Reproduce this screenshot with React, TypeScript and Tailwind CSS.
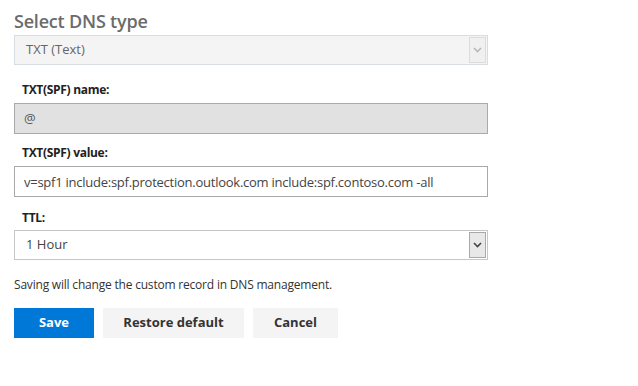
import React, { useState } from 'react';

const font = { fontFamily: '"Open Sans", "Noto Sans", Arial, sans-serif' };

function Chevron({ className }: { className?: string }) {
    return (
        <svg width="9" height="6" viewBox="0 0 9 6" className={className}>
            <path d="M1 1 L4.5 4.5 L8 1" fill="none" stroke="currentColor" strokeWidth="1.6" />
        </svg>
    );
}

export default function App() {
    const [value, setValue] = useState('v=spf1 include:spf.protection.outlook.com include:spf.contoso.com -all');

    return (
        <div className="w-[638px] h-[386px] bg-white px-[14px] pt-[9px] text-[#333]" style={font}>
            <h2 className="text-[18px] leading-[24px] text-[#6b6b6b] font-semibold tracking-[-0.2px]">Select DNS type</h2>

            <div className="mt-[2px] w-[474px] h-[30px] flex items-stretch bg-[#f4f4f4] border border-[#d8dde1]">
                <div className="flex-1 flex items-center pl-[11px] text-[13px] text-[#666]">TXT (Text)</div>
                <div className="w-[17px] my-[1px] mr-[1px] border border-[#dcdcdc] bg-[#f0f0f0] flex items-center justify-center text-[#b8b8b8]">
                    <Chevron />
                </div>
            </div>

            <label className="block mt-[17px] ml-[8px] text-[12px] leading-[16px] font-bold text-[#222] tracking-[-0.3px]">TXT(SPF) name:</label>
            <div className="mt-[5px] w-[474px] h-[31px] flex items-center bg-[#e1e1e1] border border-[#a6aaa9] pl-[9px] text-[13px] text-[#555]">@</div>

            <label className="block mt-[11px] ml-[8px] text-[12px] leading-[16px] font-bold text-[#222] tracking-[-0.3px]">TXT(SPF) value:</label>
            <input
                value={value}
                onChange={(e) => setValue(e.target.value)}
                className="mt-[5px] block w-[474px] h-[31px] bg-white border border-[#a6aaa9] pl-[9px] text-[13px] text-[#444] outline-none tracking-[-0.25px]"
                style={font}
            />

            <label className="block mt-[13px] ml-[8px] text-[12px] leading-[16px] font-bold text-[#222] tracking-[-0.3px]">TTL:</label>
            <div className="mt-[4px] w-[474px] h-[30px] flex items-stretch bg-white border border-[#c6c6c6]">
                <div className="flex-1 flex items-center pl-[11px] text-[13px] text-[#444]">1 Hour</div>
                <div className="w-[17px] my-[1px] mr-[1px] border border-[#a9a9a9] bg-[#e8e8e8] flex items-center justify-center text-[#444]">
                    <Chevron />
                </div>
            </div>

            <p className="mt-[17px] text-[12px] leading-[16px] text-[#333] tracking-[-0.2px]">Saving will change the custom record in DNS management.</p>

            <div className="mt-[15px] flex gap-[9px]">
                <button className="w-[80px] h-[30px] bg-[#0078d7] text-white text-[13px] font-bold" style={font}>Save</button>
                <button className="w-[141px] h-[30px] bg-[#f4f4f4] text-[#333] text-[13px] font-bold" style={font}>Restore default</button>
                <button className="w-[85px] h-[30px] bg-[#f4f4f4] text-[#333] text-[13px] font-bold" style={font}>Cancel</button>
            </div>
        </div>
    );
}
